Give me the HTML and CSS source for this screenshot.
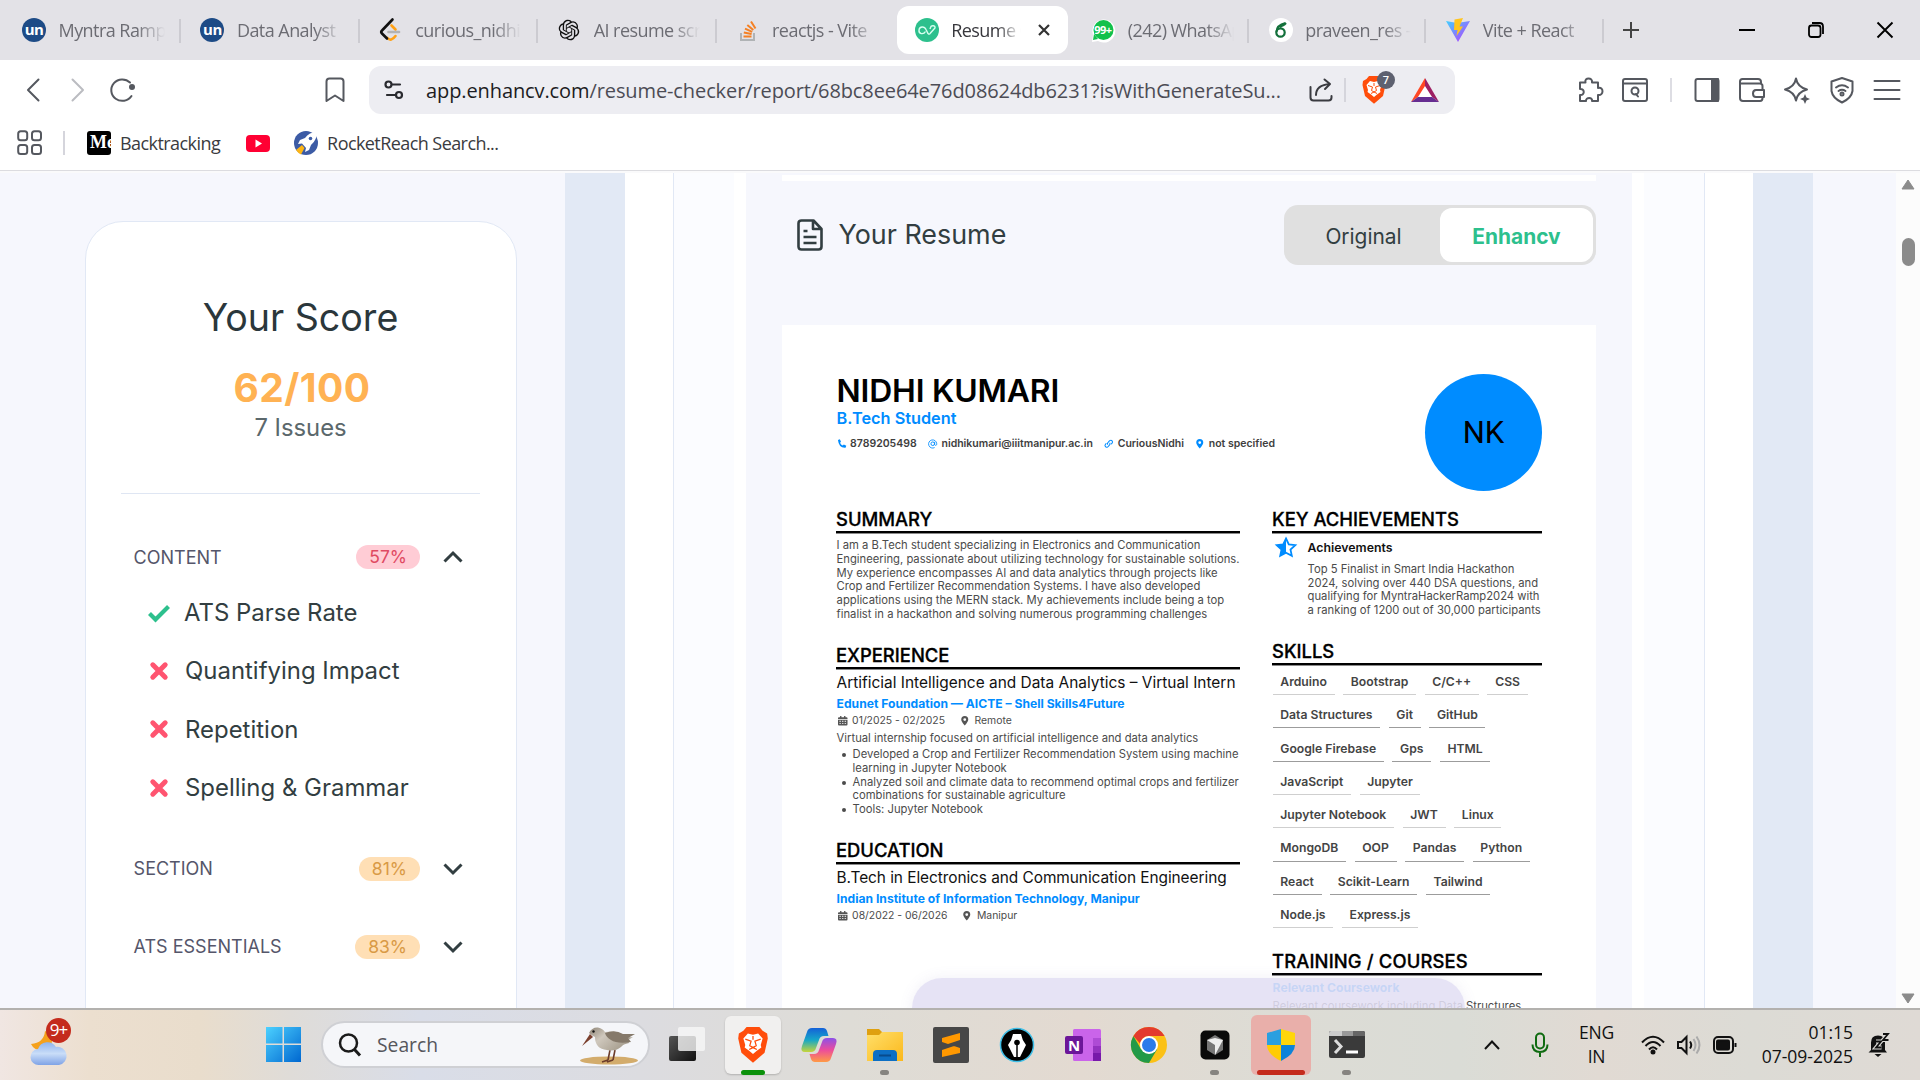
FILE: index.html
```html
<!DOCTYPE html>
<html lang="en">
<head>
<meta charset="utf-8">
<title>Resume Checker</title>
<link rel="stylesheet" href="styles.css">
</head>
<body>
<div class="tabs">
  <div class="tab"><span class="fav fav-un">un</span><span class="tab-title">Myntra Ramp</span></div>
  <div class="tab"><span class="fav fav-un">un</span><span class="tab-title">Data Analyst</span></div>
  <div class="tab"><svg class="fav" viewBox="0 0 24 24" fill="none" stroke-linecap="round" stroke-linejoin="round"><path d="M12.500 7.500L16.500 11.500M16.500 18q-4.500 6-8 2" stroke="#ffa116" stroke-width="2.600"/><path d="M13.500 1.500L3 12.500q-1.500 1.500 0 3l5 5" stroke="#111" stroke-width="2.600"/><path d="M9.500 14h10.500" stroke="#b3b3b3" stroke-width="2.600"/></svg><span class="tab-title">curious_nidhi</span></div>
  <div class="tab"><svg class="fav" viewBox="-2 -2 28 28"><path fill="#111" d="M22.282 9.821a5.985 5.985 0 0 0-.516-4.910 6.046 6.046 0 0 0-6.510-2.900A6.065 6.065 0 0 0 4.981 4.180a5.985 5.985 0 0 0-3.998 2.900 6.046 6.046 0 0 0 .743 7.097 5.980 5.980 0 0 0 .510 4.911 6.051 6.051 0 0 0 6.515 2.900A5.985 5.985 0 0 0 13.260 24a6.056 6.056 0 0 0 5.772-4.206 5.990 5.990 0 0 0 3.997-2.900 6.056 6.056 0 0 0-.747-7.073zM13.260 22.430a4.476 4.476 0 0 1-2.876-1.040l.141-.081 4.779-2.758a.795.795 0 0 0 .392-.681v-6.737l2.020 1.168a.071.071 0 0 1 .038.052v5.583a4.504 4.504 0 0 1-4.494 4.494zM3.600 18.304a4.470 4.470 0 0 1-.535-3.014l.142.085 4.783 2.759a.771.771 0 0 0 .780 0l5.843-3.369v2.332a.080.080 0 0 1-.033.062L9.740 19.950a4.500 4.500 0 0 1-6.140-1.646zM2.340 7.896a4.485 4.485 0 0 1 2.366-1.973V11.600a.766.766 0 0 0 .388.676l5.815 3.355-2.020 1.168a.076.076 0 0 1-.071 0l-4.830-2.786A4.504 4.504 0 0 1 2.340 7.872zm16.597 3.855l-5.833-3.387L15.119 7.200a.076.076 0 0 1 .071 0l4.830 2.791a4.494 4.494 0 0 1-.676 8.105v-5.678a.790.790 0 0 0-.407-.667zm2.010-3.023l-.141-.085-4.774-2.782a.776.776 0 0 0-.785 0L9.409 9.230V6.897a.066.066 0 0 1 .028-.061l4.830-2.787a4.500 4.500 0 0 1 6.680 4.660zm-12.640 4.135l-2.020-1.164a.080.080 0 0 1-.038-.057V6.075a4.500 4.500 0 0 1 7.375-3.453l-.142.080L8.704 5.460a.795.795 0 0 0-.393.681zm1.097-2.365l2.602-1.500 2.607 1.500v2.999l-2.597 1.500-2.607-1.500z"/></svg><span class="tab-title">AI resume scr</span></div>
  <div class="tab"><svg class="fav" viewBox="0 0 24 24" fill="none"><path d="M5 15v7h13v-7" stroke="#b0b3b5" stroke-width="2"/><path d="M7.500 18.500h8M7.800 14.500l7.800 1.600M9 10.600l7.200 3.300M11.300 7l6 5M15 3.500l4.500 7" stroke="#f48024" stroke-width="2"/></svg><span class="tab-title">reactjs - Vite</span></div>
  <div class="tab active"><svg class="fav" viewBox="0 0 24 24"><circle cx="12" cy="12" r="12" fill="#2dc08d"/><path d="M10.500 13.500c-2 3.500-7 2.500-6.500-1.500s5.500-4 7-.5l2 4q1.500 1.500 2.500-.5L20 10c.5-3-4-3-4.500-.5l-.5 1.500" fill="none" stroke="#d8fff0" stroke-width="1.400"/></svg><span class="tab-title">Resume C</span><svg class="tab-close" viewBox="0 0 12 12"><path d="M1 1l10 10M11 1L1 11" stroke="#333" stroke-width="2.200"/></svg></div>
  <div class="tab"><span class="fav wa"><svg viewBox="0 0 24 24"><path d="M1 24l1-7A11.500 11.500 0 1 1 7 23z" fill="#fff"/><circle cx="12.500" cy="12" r="10" fill="#11c14b"/><path d="M2 22l1-6 4 5z" fill="#11c14b"/></svg><b>99+</b></span><span class="tab-title">(242) WhatsApp</span></div>
  <div class="tab"><svg class="fav" viewBox="0 0 24 24"><circle cx="12" cy="12" r="12" fill="#fff"/><circle cx="11.500" cy="14.500" r="4.200" fill="none" stroke="#13703b" stroke-width="2.200"/><path d="M7.500 14q0-7 9-9-4 2-5.500 4.500M10 8q4 .5 7-3" fill="none" stroke="#13703b" stroke-width="2"/></svg><span class="tab-title">praveen_res -</span></div>
  <div class="tab"><svg class="fav" viewBox="0 0 24 24"><defs><linearGradient id="vt" x2="1" y2="1"><stop stop-color="#41d1ff"/><stop offset="1" stop-color="#bd34fe"/></linearGradient></defs><path d="M0 3l11 2 13-2-12 21z" fill="url(#vt)"/><path d="M17 0L8.500 1.500 8 12h3.500l-1 6L17 8.500h-3.500z" fill="#ffc51f"/></svg><span class="tab-title">Vite + React</span></div>
  <svg class="newtab" viewBox="0 0 16 16"><path d="M8 0v16M0 8h16" stroke="#444" stroke-width="2"/></svg>
  <div class="winctl">
    <svg viewBox="0 0 16 16"><path d="M0 8h16" stroke="#000" stroke-width="2"/></svg>
    <svg viewBox="0 0 16 16" fill="none" stroke="#000" stroke-width="1.800"><rect x="1" y="3.500" width="11.500" height="11.500" rx="2.500"/><path d="M4 1h7.500q3.500 0 3.500 3.500V12"/></svg>
    <svg viewBox="0 0 16 16"><path d="M.5.500l15 15M15.500.500l-15 15" stroke="#000" stroke-width="1.900"/></svg>
  </div>
</div>

<div class="toolbar">
  <div class="nav">
    <svg viewBox="0 0 14 24" width="14" height="24" class="st"><path d="M12.500 1.500L2 12l10.500 10.500"/></svg>
    <svg viewBox="0 0 14 24" width="14" height="24" class="st fwd"><path d="M1.500 1.500L12 12 1.500 22.500"/></svg>
    <svg viewBox="0 0 26 24" width="26" height="24" class="st"><path d="M21.500 18A11 10.700 0 1 1 20 4.500"/><circle cx="22" cy="9" r="3" fill="#55585f" stroke="none"/></svg>
  </div>
  <svg viewBox="0 0 20 26" width="20" height="26" class="st bm"><path d="M1.500 24V4.500q0-3 3-3h11q3 0 3 3V24L10 18.500z"/></svg>
  <div class="url">
    <svg viewBox="0 0 20 20" width="20" height="20" class="st dark"><circle cx="4.500" cy="4.500" r="3"/><path d="M8 4.500h8M3 15h8"/><circle cx="15" cy="15" r="3"/></svg>
    <span class="addr"><b>app.enhancv.com</b>/resume-checker/report/68bc8ee64e76d08624db6231?isWithGenerateSu...</span>
    <svg viewBox="0 0 24 24" width="24" height="24" class="st share"><path d="M1.500 9v10.500q0 3 3 3h15q3 0 3-3V18M7 17q0-10 14-11M15.500 1.500L21 6l-5 5"/></svg>
    <i class="bar"></i>
    <span class="brave"><svg viewBox="0 0 24 28" width="24" height="28"><use href="#lion"/></svg><em>7</em></span>
    <svg class="bat" viewBox="0 0 28 24" width="28" height="24"><path d="M14 0L0 24l14-10z" fill="#ff4724"/><path d="M14 0l14 24-14-10z" fill="#9e1f63"/><path d="M0 24h28L14 14z" fill="#662d91"/><path d="M14 8L7 19h14z" fill="#fff"/></svg>
  </div>
  <div class="tools">
    <svg viewBox="0 0 26 26" class="st"><path d="M2 8V5.500h5.500C6 0 15 0 14 5.500h6V11c6-1.500 6 8 0 7v6h-6c1-4-6.500-4-6 0H2v-6c5 .5 5-6.500 0-6z"/></svg>
    <svg viewBox="0 0 26 26" class="st"><rect x="1" y="2" width="24" height="22" rx="2"/><path d="M1 6.500h24M16 19.500l-2-2.500"/><circle cx="13" cy="14" r="3.500"/></svg>
    <i class="bar"></i>
    <svg viewBox="0 0 26 26" class="st"><rect x="1.500" y="2" width="23" height="22" rx="2"/><path d="M18 2h6v22h-6z" fill="#55585f"/></svg>
    <svg viewBox="0 0 26 26" class="st"><path d="M23.500 13V9q0-2.500-2.500-2.500H1V4.500Q1 2 3.500 2H19q3 0 3 3v1.500M1 6v15q0 3 3 3h17q2.500 0 2.500-3v-1M25 13h-8q-3 0-3 3.500t3 3.500h8z"/></svg>
    <svg viewBox="0 0 26 26" class="st"><path d="M12 1.500q1.500 8.500 11 11-9.500 2.500-11 11-1.500-8.500-11-11 9.500-2.500 11-11z"/><path d="M21 17l1.500 3.500L26 22l-3.500 1.500L21 27l-1.500-3.500L16 22l3.500-1.500z" fill="#55585f" stroke="none"/></svg>
    <svg viewBox="0 0 26 26" class="st"><path d="M13 1l10.500 3.500V14q-1 7-10.500 11.500Q3.500 21 2.500 14V4.500zM7 10.500q6-4.500 12 0M9.500 14q3.500-2.500 7 0"/><circle cx="13" cy="17" r="1.500"/></svg>
    <svg viewBox="0 0 26 26" class="st"><path d="M.5 4h25M.5 13h25M.5 22h25"/></svg>
  </div>
</div>

<div class="bookmarks">
  <svg viewBox="0 0 26 26" width="26" height="26" class="st"><rect x="1.200" y="1.200" width="9" height="9" rx="2.500"/><rect x="15" y="1.200" width="9" height="9" rx="2.500"/><rect x="1.200" y="15" width="9" height="9" rx="2.500"/><rect x="15" y="15" width="9" height="9" rx="2.500"/></svg>
  <i class="bar"></i>
  <span class="medium">Me</span><span class="bk">Backtracking</span>
  <svg class="yt" viewBox="0 0 24 17" width="24" height="17"><rect width="24" height="17" rx="4" fill="#ff0033"/><path d="M9.500 4.500l6.500 4-6.500 4z" fill="#fff"/></svg>
  <svg class="rr" viewBox="0 0 24 24" width="24" height="24"><circle cx="12" cy="12" r="12" fill="#3c5ba5"/><path d="M23 1q-8 0-12 6l-5 2-2 4 4-.5L12 17l-1 4 4-2 2-5q6-5 6-13z" fill="#fff"/><path d="M8 14l-6 5q2 3 5 4.500L10.500 17z" fill="#fdb515"/><circle cx="16.500" cy="7.500" r="1.800" fill="#3c5ba5"/></svg><span class="bk">RocketReach Search...</span>
</div>

<div class="page">
  <div class="left">
    <div class="score">
      <h1>Your Score</h1>
      <div class="num">62/100</div>
      <div class="issues">7 Issues</div>
      <hr>
      <div class="cat"><span>CONTENT</span><em class="pill red">57%</em><svg viewBox="0 0 20 12" width="20" height="12"><path d="M1.500 10.500L10 2l8.500 8.500"/></svg></div>
      <ul class="checks">
        <li><svg viewBox="0 0 24 18" width="24" height="18"><path d="M2.500 9.500l6 6L21.500 2.500" stroke="#2dc08d" stroke-width="4.200" fill="none"/></svg>ATS Parse Rate</li>
        <li><svg class="x" viewBox="0 0 18 18"><path d="M2.800 2.800l12.400 12.400M15.200 2.800L2.800 15.200"/></svg>Quantifying Impact</li>
        <li><svg class="x" viewBox="0 0 18 18"><path d="M2.800 2.800l12.400 12.400M15.200 2.800L2.800 15.200"/></svg>Repetition</li>
        <li><svg class="x" viewBox="0 0 18 18"><path d="M2.800 2.800l12.400 12.400M15.200 2.800L2.800 15.200"/></svg>Spelling &amp; Grammar</li>
      </ul>
      <div class="cat"><span>SECTION</span><em class="pill">81%</em><svg viewBox="0 0 20 12" width="20" height="12"><path d="M1.500 1.500L10 10l8.500-8.500"/></svg></div>
      <div class="cat last"><span>ATS ESSENTIALS</span><em class="pill">83%</em><svg viewBox="0 0 20 12" width="20" height="12"><path d="M1.500 1.500L10 10l8.500-8.500"/></svg></div>
    </div>
  </div>
  <div class="band"></div>
  <div class="frame">
    <div class="pane">
      <div class="strip"></div>
      <div class="head">
        <svg viewBox="0 0 26 32" width="26" height="32"><path d="M4.500 1.500h12L24.500 10v17.500q0 3-3 3h-17q-3 0-3-3v-23q0-3 3-3zM16 2v8h8M6.500 12h4M6.500 18h13M6.500 24h13" fill="none" stroke="#323e41" stroke-width="2.600" stroke-linejoin="round"/></svg>
        <h2>Your Resume</h2>
        <div class="toggle"><span>Original</span><b>Enhancv</b></div>
      </div>
      <div class="paper">
        <div class="top">
          <div>
            <div class="name">NIDHI KUMARI</div>
            <div class="role">B.Tech Student</div>
            <div class="contacts">
              <span><svg viewBox="0 0 10 10"><path d="M1 1l2-.8 1.200 2.600L3.200 4q.8 2 2.800 2.900l1.200-1.100L9.800 7 9 9.200Q2 9.800 1 1z" fill="#008cff"/></svg>8789205498</span>
              <span><svg viewBox="0 0 10 10" fill="none" stroke="#008cff"><circle cx="5" cy="5" r="1.900"/><path d="M7 3v3q1 1.500 2.200 0V5A4.300 4.300 0 1 0 7 9" stroke-width=".9"/></svg>nidhikumari@iiitmanipur.ac.in</span>
              <span><svg viewBox="0 0 10 10" fill="none" stroke="#008cff" stroke-width="1.100"><path d="M4 6Q3 4.500 4.500 3.200l1.500-1.500q1.500-1 2.500.2t0 2.400L7.500 5.500M6 4q1 1.500-.5 2.800L4 8.300q-1.500 1-2.500-.2t0-2.400L2.500 4.500"/></svg>CuriousNidhi</span>
              <span class="np"><svg viewBox="0 0 10 10"><use href="#pin" fill="#008cff"/></svg>not specified</span>
            </div>
          </div>
          <div class="avatar">NK</div>
        </div>
        <div class="cols">
          <div class="main">
            <h3>SUMMARY</h3>
            <p>I am a B.Tech student specializing in Electronics and Communication<br>Engineering, passionate about utilizing technology for sustainable solutions.<br>My experience encompasses AI and data analytics through projects like<br>Crop and Fertilizer Recommendation Systems. I have also developed<br>applications using the MERN stack. My achievements include being a top<br>finalist in a hackathon and solving numerous programming challenges</p>
            <h3>EXPERIENCE</h3>
            <div class="job">Artificial Intelligence and Data Analytics – Virtual Intern</div>
            <div class="org">Edunet Foundation — AICTE – Shell Skills4Future</div>
            <div class="when"><svg viewBox="0 0 10 10"><use href="#cal"/></svg><span>01/2025 - 02/2025</span><svg viewBox="0 0 10 10"><use href="#pin" fill="#555"/></svg>Remote</div>
            <p class="desc">Virtual internship focused on artificial intelligence and data analytics</p>
            <ul class="bul"><li>Developed a Crop and Fertilizer Recommendation System using machine<br>learning in Jupyter Notebook</li><li>Analyzed soil and climate data to recommend optimal crops and fertilizer<br>combinations for sustainable agriculture</li><li>Tools: Jupyter Notebook</li></ul>
            <h3>EDUCATION</h3>
            <div class="job degree">B.Tech in Electronics and Communication Engineering</div>
            <div class="org school">Indian Institute of Information Technology, Manipur</div>
            <div class="when"><svg viewBox="0 0 10 10"><use href="#cal"/></svg><span>08/2022 - 06/2026</span><svg viewBox="0 0 10 10"><use href="#pin" fill="#555"/></svg>Manipur</div>
          </div>
          <div class="side">
            <h3>KEY ACHIEVEMENTS</h3>
            <div class="ach">
              <svg viewBox="0 0 22 20" width="22" height="20"><path d="M11 1.500l2.800 5.900 6.500.8-4.800 4.400 1.300 6.300L11 15.800l-5.800 3.100 1.300-6.300L1.700 8.200l6.500-.8z" fill="none" stroke="#008cff" stroke-width="1.800"/><path d="M11 1.500v14.300l-5.800 3.100 1.300-6.300L1.700 8.200l6.500-.8z" fill="#008cff"/></svg>
              <div><b>Achievements</b><p>Top 5 Finalist in Smart India Hackathon<br>2024, solving over 440 DSA questions, and<br>qualifying for MyntraHackerRamp2024 with<br>a ranking of 1200 out of 30,000 participants</p></div>
            </div>
            <h3 class="sk">SKILLS</h3>
            <div class="skills">
              <div><span>Arduino</span><span>Bootstrap</span><span>C/C++</span><span>CSS</span></div>
              <div class="d"><span>Data Structures</span><span>Git</span><span>GitHub</span></div>
              <div class="d"><span>Google Firebase</span><span>Gps</span><span>HTML</span></div>
              <div><span>JavaScript</span><span>Jupyter</span></div>
              <div><span>Jupyter Notebook</span><span>JWT</span><span>Linux</span></div>
              <div class="d"><span>MongoDB</span><span>OOP</span><span>Pandas</span><span>Python</span></div>
              <div class="d"><span>React</span><span>Scikit-Learn</span><span>Tailwind</span></div>
              <div><span>Node.js</span><span>Express.js</span></div>
            </div>
            <h3 class="train">TRAINING / COURSES</h3>
            <div class="org rel">Relevant Coursework</div>
            <p class="relp">Relevant coursework including Data Structures,</p>
          </div>
        </div>
      </div>
    </div>
  </div>
  <div class="band"></div>
  <div class="edge"></div>
  <div class="scroll"><svg viewBox="0 0 14 11" width="14" height="11"><path d="M7 1l6 9H1z" stroke="#8b8b8b" stroke-linejoin="round"/></svg><i></i><svg class="dn" viewBox="0 0 14 11" width="14" height="11"><path d="M7 10L1 1h12z" stroke="#8b8b8b" stroke-linejoin="round"/></svg></div>
  <div class="purple"></div>
</div>

<div class="taskbar">
  <div class="weather"><svg viewBox="0 0 38 46" width="38" height="46"><path d="M15 9q-1 12-14 13 4 8 14 6 10-5 6-16z" fill="#f5a11c"/><defs><linearGradient id="cl" x2="0" y2="1"><stop stop-color="#8fb4ee"/><stop offset=".5" stop-color="#c9ddf8"/><stop offset="1" stop-color="#7fa3e6"/></linearGradient></defs><path d="M9 43a8 8 0 0 1-1-16 10 10 0 0 1 18-2 9 9 0 0 1 3 18z" fill="url(#cl)"/></svg><em>9+</em></div>
  <svg class="win" viewBox="0 0 35 35" width="35" height="35"><defs><linearGradient id="wn" gradientUnits="userSpaceOnUse" x2="35" y2="35"><stop stop-color="#4cd1ff"/><stop offset="1" stop-color="#0067d0"/></linearGradient></defs><path d="M0 0h16.500v16.500H0zM18 0h17v16.500H18zM0 18h16.500v17H0zM18 18h17v17H18z" fill="url(#wn)"/></svg>
  <div class="search"><svg viewBox="0 0 24 24" width="24" height="24"><circle cx="10.500" cy="10" r="8.500" fill="none" stroke="#1a1a1a" stroke-width="2.500"/><path d="M16.500 16.500l5.500 6" stroke="#1a1a1a" stroke-width="3"/></svg><span>Search</span>
    <svg class="bird" viewBox="0 0 60 38" width="60" height="38"><defs><linearGradient id="bd" x2="1" y2=".6"><stop stop-color="#8d8374"/><stop offset=".4" stop-color="#cfc8bd"/><stop offset="1" stop-color="#a39a8a"/></linearGradient></defs><ellipse cx="30" cy="34.500" rx="29" ry="4" fill="#d3ac6c"/><path d="M31 24l-2 10M36 24l-2 10M29 34l-6 2M34 34l-6 2" stroke="#6b3b2a" stroke-width="1.600" fill="none"/><path d="M11 8L3 20 14 11z" fill="#7a3f2d"/><path d="M10 7q3-6 9-5.500 5 1 7 4.500 12-2 18 3 5 3 10 2l-5 3 1 3q-6 1-8 4-6 5-14 3-12-1-12-13l-2-1z" fill="url(#bd)"/><path d="M26 7q10-4 18 1l12 0-7 4 3 4q-14 2-20-2-5-3-6-7z" fill="#85796a"/><circle cx="14.500" cy="5.500" r="1.200" fill="#111"/></svg></div>
  <div class="apps">
    <div class="app"><svg viewBox="0 0 36 36"><defs><linearGradient id="tv" x2="1" y2="1"><stop stop-color="#555"/><stop offset="1" stop-color="#111"/></linearGradient></defs><rect y="9" width="27" height="25" rx="2" fill="url(#tv)"/><rect x="9" width="27" height="24" rx="2" fill="#f8f8f8" fill-opacity=".8"/></svg></div>
    <div class="app on"><svg viewBox="0 0 24 28"><defs><g id="lion"><path d="M7 0h10l2.500 3L23 5l.5 4L21 20l-9 7.800L3 20 .5 9 1 5l3.500-2z" fill="#ff4d0b"/><path d="M8 5l4 1 4-1 3.500 4-1.500 5 .5 2-3.500 2.500L12 21l-3-2.500L5.500 16l.5-2L4.500 9z" fill="#fff"/><path d="M6 9.500l4.500 1.500-1 3.500 2.500 1.500 2.500-1.500-1-3.500L18 9.500M12 7v3M9 17.500l3-1.500 3 1.500" stroke="#ff4d0b" stroke-width="1" fill="none"/></g></defs><use href="#lion"/></svg><i></i></div>
    <div class="app"><svg viewBox="0 0 36 36" fill="none"><defs><linearGradient id="c1" x2="0" y2="1"><stop stop-color="#1461d8"/><stop offset=".5" stop-color="#16a7c8"/><stop offset="1" stop-color="#c6d53a"/></linearGradient><linearGradient id="c2" x2="0" y2="1"><stop stop-color="#8c50e8"/><stop offset=".5" stop-color="#ec4c9c"/><stop offset="1" stop-color="#ff9a45"/></linearGradient></defs><path d="M11 1h11q3 0 4 3l1.500 5H23q-4 0-5 4l-3 8q-1 4-5 4H4q-5 0-3-6L6 5q1-4 5-4z" fill="url(#c1)"/><path d="M25 35H14q-3 0-4-3l-1.500-5H13q4 0 5-4l3-8q1-4 5-4h6q5 0 3 6l-5 14q-1 4-5 4z" fill="url(#c2)"/></svg></div>
    <div class="app"><svg viewBox="0 0 36 36"><defs><linearGradient id="fd" x2="1" y2="1"><stop stop-color="#ffdf6a"/><stop offset="1" stop-color="#fbb81b"/></linearGradient></defs><path d="M0 2h12l4 4v6H0z" fill="#dfa010"/><path d="M0 8h12l3-3h21v29H0z" fill="url(#fd)"/><path d="M6 34V27q0-4 4-4h16q4 0 4 4v7z" fill="#0d6fc4"/><path d="M12 28.500h12" stroke="#084b8c" stroke-width="2"/></svg><i class="dot"></i></div>
    <div class="app"><svg viewBox="0 0 36 36"><rect width="36" height="36" rx="2" fill="#474747"/><path d="M27 6v7l-12 4 12 4v5L9 30v-7l12-4-12-4v-4z" fill="#ff9800"/></svg></div>
    <div class="app"><svg viewBox="0 0 36 36"><circle cx="18" cy="18" r="16.500" fill="#000" stroke="#3fbfe8" stroke-width="1.500"/><path d="M14 7h8q1 6 5 11l-6 12h-6L9 18q4-5 5-11z" fill="#fff"/><path d="M18 16v14" stroke="#000" stroke-width="1.500"/><circle cx="18" cy="15.500" r="2.800" fill="#000"/></svg></div>
    <div class="app note"><svg viewBox="0 0 36 36"><rect x="8" y="2" width="28" height="32" rx="1.500" fill="#ca64ea"/><path d="M28 11h8v8h-8z" fill="#ae4bd5"/><path d="M28 19h8v7h-8z" fill="#9332bf"/><path d="M28 26h8v8h-8z" fill="#7719aa"/><rect y="9" width="18" height="18" rx="2" fill="#6c1699"/></svg><b>N</b></div>
    <div class="app"><svg viewBox="0 0 36 36"><circle cx="18" cy="18" r="18" fill="#fbc116"/><path d="M2.400 9l7.800 13.500L18 18l8 4.500L18 36A18 18 0 0 1 2.400 9z" fill="#229a48"/><path d="M2.400 9A18 18 0 0 1 33.600 9H18q-7 0-9 7.500z" fill="#e33b2e"/><circle cx="18" cy="18" r="9" fill="#fff"/><circle cx="18" cy="18" r="7" fill="#2b7bea"/></svg></div>
    <div class="app"><svg viewBox="0 0 36 36"><rect x="3.500" y="3.500" width="29" height="29" rx="5" fill="#0a0a0a"/><path d="M18 8l8 5v10l-8 5-8-5V13z" fill="#777"/><path d="M10 13l8-2 8 2-8 15v-10z" fill="#eee"/></svg><i class="dot"></i></div>
    <div class="app alert"><svg viewBox="0 0 32 36"><defs><clipPath id="sh"><path d="M16 2l14 4v12q0 9-14 16Q2 27 2 18V6z"/></clipPath></defs><g clip-path="url(#sh)"><path d="M0 0h16v18H0z" fill="#2a9fe0"/><path d="M16 0h16v18H16z" fill="#ffd60a"/><path d="M0 18h16v18H0z" fill="#ffcb05"/><path d="M16 18h16v18H16z" fill="#0d83d8"/></g></svg><i></i></div>
    <div class="app"><svg viewBox="0 0 36 36"><rect y="4" width="36" height="27" rx="2" fill="#3a3a3a"/><path d="M0 9V6q0-2 2-2h11v5z" fill="#ccc"/><path d="M13 4h11v5H13z" fill="#999"/><path d="M24 4h10q2 0 2 2v3H24z" fill="#666"/><path d="M6 13l6 6.500L6 26" fill="none" stroke="#ddd" stroke-width="3"/><path d="M17 25h12" stroke="#fff" stroke-width="3"/></svg><i class="dot"></i></div>
  </div>
  <div class="tray">
    <svg viewBox="0 0 16 10" width="16" height="10" class="tk up"><path d="M1 9l7-7.500L15 9"/></svg>
    <svg viewBox="0 0 18 26" width="18" height="26" class="tk mic"><rect x="5" y="1.500" width="8" height="15" rx="4"/><path d="M1.500 12.500q0 7.500 7.500 7.500t7.500-7.500M9 20v5"/></svg>
    <div class="lang">ENG<br>IN</div>
    <svg viewBox="0 0 24 20" width="24" height="20" class="tk wifi"><path d="M1 7.500q11-11.500 22 0M4.500 11q7.500-8 15 0M8 14.500q4-4.500 8 0"/><circle cx="12" cy="17" r="1.500" fill="#111"/></svg>
    <svg viewBox="0 0 24 20" width="24" height="20" class="tk vol"><path d="M1 7v6h3.500l5 5V2l-5 5zM13 6.500q2.500 3.500 0 7"/><path d="M16.500 4q4 6 0 12M19.500 1.500q6 8.500 0 17" stroke="#aaa"/></svg>
    <svg viewBox="0 0 24 20" width="24" height="20" class="tk batt"><rect x="1" y="2" width="19" height="16" rx="4"/><rect x="4" y="5.500" width="12" height="9" rx="1" fill="#111"/><path d="M22.500 8v4"/></svg>
    <div class="clock">01:15<br>07-09-2025</div>
    <svg viewBox="0 0 22 24" width="22" height="24" class="bell"><path d="M3 17V9.500Q3 2.500 10 2.500t7 7V17l2 2.500H.5z" fill="#111"/><path d="M6.500 21h7L10 24z" fill="#111"/><path d="M15 1h5l-5 6h5.500M8 8.500h5L8 14.500h5.500" fill="none" stroke="#dddcd8" stroke-width="4"/><path d="M15 1h5l-5 6h5.500M8 8.500h5L8 14.500h5.500" fill="none" stroke="#111" stroke-width="1.800"/></svg>
  </div>
</div>

<svg width="0" height="0" class="defs"><defs>
  <path id="pin" d="M5 10Q1.300 6 1.300 3.700a3.700 3.700 0 0 1 7.400 0Q8.700 6 5 10zM5 2.300a1.500 1.500 0 1 0 0 3 1.500 1.500 0 0 0 0-3z" fill-rule="evenodd"/>
  <g id="cal" fill="#555"><path d="M1 1.300h8q1 0 1 1V3.200H0V2.300q0-1 1-1zM2.200 0h1.400v2H2.200zM6.400 0h1.400v2H6.400z"/><path d="M0 3.900h10V9q0 1-1 1H1Q0 10 0 9zM1.500 5v1h1.500V5zm2.700 0v1h1.500V5zM7 5v1h1.500V5zM1.500 7.500v1h1.500v-1zm2.700 0v1h1.500v-1zm2.800 0v1h1.500v-1z" fill-rule="evenodd"/></g>
</defs></svg>
</body>
</html>
```
FILE: styles.css
```css
* { box-sizing: border-box; }
body { margin: 0; width: 1920px; height: 1080px; overflow: hidden; background: #fff; font-family: Inter, "Liberation Sans", sans-serif; color: #323e41; }
svg { display: block; flex: none; overflow: visible; }
h1, h2, h3, p, ul { margin: 0; padding: 0; font-weight: 400; list-style: none; }
em, i { font-style: normal; }
.defs { height: 0; }
.st { fill: none; stroke: #55585f; stroke-width: 2; stroke-linejoin: round; stroke-linecap: round; }
.dark { stroke: #2a2b30; stroke-width: 2.2; }
.tabs, .toolbar, .bookmarks, .taskbar { font-family: "Open Sans", "Noto Sans", sans-serif; }

/* tab strip */
.tabs { display: flex; height: 60px; padding-left: 3px; background: #e3e2e7; align-items: center; }
.tab { position: relative; display: flex; flex: none; width: 178.4px; height: 48px; padding-left: 19px; align-items: center; gap: 12.500px; }
.tab::after { content: ""; position: absolute; right: 0; top: 13px; width: 2px; height: 24px; background: #cccbd1; }
.tab:nth-child(5)::after, .tab.active::after { display: none; }
.tab:nth-child(n+7) { width: 177.600px; padding-left: 20px; gap: 12.500px; }
.fav { flex: none; width: 24px; height: 24px; }
.fav-un { border-radius: 50%; background: #1d4b86; color: #fff; font: 700 15px/22px "Open Sans", sans-serif; text-align: center; letter-spacing: -.5px; }
.tab-title { width: 106px; overflow: hidden; white-space: nowrap; font-size: 18px; letter-spacing: -.55px; line-height: 26px; color: #6c6c73; -webkit-mask-image: linear-gradient(90deg, #000 78px, transparent 106px); mask-image: linear-gradient(90deg, #000 78px, transparent 106px); }
.tab.active { width: 170.500px; margin: 0 3.500px 0 2.200px; padding-left: 18px; background: #fff; border-radius: 12px; gap: 12px; }
.active .tab-title { width: 70px; color: #37373c; -webkit-mask-image: linear-gradient(90deg, #000 46px, transparent 70px); mask-image: linear-gradient(90deg, #000 46px, transparent 70px); }
.tab-close { width: 12px; height: 12px; margin-left: 5px; }
.wa { position: relative; }
.wa b { position: absolute; left: 3px; top: 4px; color: #fff; font-size: 11px; line-height: 16px; letter-spacing: -.5px; }
.newtab { width: 16px; height: 16px; margin-left: 19.500px; }
.winctl { display: flex; gap: 53px; margin-left: auto; padding-right: 27px; }
.winctl svg { width: 16px; height: 16px; }

/* toolbar */
.toolbar { display: flex; height: 60px; padding-left: 26px; align-items: center; background: #fff; }
.nav { display: flex; gap: 24px; width: 299px; align-items: center; }
.nav svg:nth-child(2) { margin: 0 1px 0 7px; }
.nav .fwd { stroke: #bbbcc1; }
.bm { margin-right: 24px; }
.url { display: flex; flex: none; width: 1086px; height: 48px; border-radius: 12px; background: #ededf2; align-items: center; padding-left: 15px; }
.addr { width: 858px; margin: 2px 0 0 22px; white-space: nowrap; font-size: 20px; letter-spacing: -.1px; line-height: 30px; color: #4c4c55; }
.addr b { font-weight: 400; color: #1c1c22; }
.share { margin-left: 25px; stroke: #3a3b40; }
.bar { width: 2px; height: 24px; background: #d5d5dc; }
.url .bar { margin: 0 16px 0 11px; }
.brave { position: relative; }
.brave em { position: absolute; left: 15px; top: -5px; width: 18px; height: 18px; border-radius: 9px; background: #5e6170; color: #fff; font-size: 11px; font-weight: 600; line-height: 18px; text-align: center; }
.bat { margin-left: 25px; }
.tools { display: flex; margin-left: auto; padding-right: 20px; align-items: center; gap: 19px; }
.tools svg { width: 26px; height: 26px; }
.tools svg:nth-child(2) { margin-left: -1px; }
.tools .bar { margin: 0 3px 0 3px; background: #dddde3; }

/* bookmarks */
.bookmarks { display: flex; height: 53px; padding: 0 0 5px 17px; align-items: center; border-bottom: 2px solid #fafafb; box-shadow: inset 0 -1px 0 #dcdce0; background: #fff; }
.bookmarks .bar { margin: 0 22px 0 20px; }
.medium { width: 24px; height: 24px; overflow: hidden; border-radius: 3px; background: #000; color: #fff; font: 700 18px/23px "Liberation Serif", serif; padding-left: 3px; }
.bk { margin-left: 9px; font-size: 18px; letter-spacing: -.57px; line-height: 26px; color: #3a3b40; white-space: nowrap; }
.yt { margin-left: 26px; }
.rr { margin-left: 24px; }

/* page */
.page { position: relative; display: flex; height: 835px; overflow: hidden; background: #fff; }
.left { width: 565px; background: #f6f7fd; padding: 48px 0 0 85px; }
.band { width: 60px; background: #e2e9f5; flex: none; }
.frame { flex: none; width: 1128px; padding: 0 48px; }
.pane { width: 1032px; height: 835px; padding: 0 108px; border: 0 solid #e1e8f5; border-width: 0 1px; background: linear-gradient(90deg, #fbfcff 60px, #fff 60px 72px, #f6f7fd 72px 958px, #fff 958px 970px, #fbfcff 970px); }
.edge { width: 83px; background: #f6f7fd; flex: none; }
.scroll { width: 24px; background: #fcfcfc; display: flex; flex-direction: column; align-items: center; padding: 6px 0 4px; fill: #8b8b8b; }
.scroll i { width: 13px; height: 28px; margin-top: 48px; border-radius: 7px; background: #8b8b8b; }
.scroll .dn { margin-top: auto; }
.purple { position: absolute; left: 912px; top: 805px; width: 553px; height: 60px; border-radius: 30px 30px 0 0; background: rgba(227, 223, 244, .88); box-shadow: 0 0 14px rgba(120, 110, 180, .1); }

.score { width: 432px; height: 900px; border: 1px solid #e1e8f5; border-radius: 38px; background: #fff; padding: 73px 36px 0 35px; text-align: center; }
.score h1 { font-size: 37.600px; line-height: 45px; color: #2b373b; }
.num { margin-top: 25px; font-size: 39px; font-weight: 700; letter-spacing: .4px; line-height: 46px; color: #ffb253; padding-left: 3px; }
.issues { font-size: 23.800px; line-height: 34px; color: #5b686c; }
hr { height: 1px; margin: 48px 0 0; border: 0; background: #dfe6f3; }
.cat { display: flex; height: 30px; align-items: center; margin: 48px 17px 0 12.600px; font-size: 18px; color: #55566a; }
.pill { height: 24px; margin-left: auto; padding: 0 13px; border-radius: 12px; background: #ffdfb5; color: #d99a45; font-size: 17.500px; line-height: 24px; }
.red { background: #ffccd5; color: #df4a62; }
.cat svg { margin-left: 23px; fill: none; stroke: #323e41; stroke-width: 3; }
.checks { margin: 11.500px 0 0 26px; text-align: left; }
.checks li { display: flex; height: 58.300px; align-items: center; font-size: 23.950px; }
.checks svg { margin-right: 13px; }
.checks .x { width: 18px; height: 18px; margin: 0 17px 0 3px; stroke: #ff5470; stroke-width: 5; stroke-linecap: round; }
.checks + .cat { margin-top: 37px; }

.strip { height: 8px; border-top: 2px solid #f6f7fd; background: #fff; }
.head { display: flex; height: 144px; padding: 24px 0 0 15px; }
.head > svg { margin-top: 14px; }
.head h2 { margin: 11px 0 0 15.500px; font-size: 26.900px; line-height: 36px; }
.toggle { display: flex; width: 312px; height: 60px; margin-left: auto; padding: 3px; border-radius: 14px; background: #e0e0e0; text-align: center; font-size: 20.900px; line-height: 57px; }
.toggle span { width: 153px; }
.toggle b { width: 153px; height: 54px; border-radius: 12px; background: #fff; color: #2dc08d; line-height: 57px; }

.paper { width: 814px; height: 700px; background: #fff; padding: 48px 54px 0; color: #4b4b4b; white-space: nowrap; }
.top { display: flex; justify-content: space-between; height: 135.500px; }
.top > div:first-child, .main > :not(h3), .side > :not(h3) { position: relative; left: .6px; }
.name { font-size: 31.900px; font-weight: 600; letter-spacing: -.2px; line-height: 35px; color: #000; }
.role { font-size: 16.300px; font-weight: 600; line-height: 21px; color: #008cff; }
.contacts { display: flex; gap: 11.300px; margin-top: 7.500px; font-size: 10.500px; font-weight: 600; line-height: 14px; color: #3e3e3e; }
.contacts span { display: flex; align-items: center; gap: 4px; }
.contacts svg { width: 9.500px; height: 9.500px; }
.avatar { width: 117px; height: 117px; margin-top: 1px; border-radius: 50%; background: #008cff; color: #000; font: 400 31px/117px Roboto, sans-serif; text-align: center; }
.cols { display: grid; grid-template-columns: 404px 270px; column-gap: 32px; }
h3 { height: 24.500px; border-bottom: 2px solid #000; box-shadow: 0 1px 0 #8a8a8a; font-size: 18.400px; font-weight: 500; line-height: 21px; color: #000; -webkit-text-stroke: .3px #000; }
.cols p, .bul { margin-top: 6px; font-size: 11.240px; line-height: 13.800px; }
p + h3, .bul + h3 { margin-top: 22.800px; }
.job { margin-top: 4px; font-size: 15.450px; line-height: 20px; color: #111; }
.degree { letter-spacing: -.07px; }
.org { margin-top: 3.400px; font-size: 12.130px; font-weight: 700; line-height: 16px; color: #008cff; }
.school { margin-top: 2.600px; }
.when { display: flex; align-items: center; margin-top: 1.400px; font-size: 10.400px; line-height: 14px; padding-left: 1px; }
.school + .when { margin-top: 2.200px; }
.when svg { width: 9.500px; height: 9.500px; margin-right: 5px; }
.when span { margin-right: 15px; }
.cols .desc { margin-top: 4px; }
.cols .bul { margin-top: 2.300px; }
.bul li { position: relative; padding-left: 16px; }
.bul li::before { content: ""; position: absolute; left: 5px; top: 5px; width: 4px; height: 4px; border-radius: 2px; background: #4b4b4b; }
.ach { display: flex; margin-top: 6.700px; gap: 11px; padding-left: 2px; }
.ach svg { margin-top: -3px; }
.ach b { display: block; font-size: 12.300px; font-weight: 600; line-height: 16px; color: #111; }
.cols .ach p { margin-top: 7.200px; }
.sk { margin-top: 22.600px; }
.skills { display: flex; flex-direction: column; gap: 7.200px; margin: 3.900px 0 22.800px; font-size: 12.200px; font-weight: 600; line-height: 25.100px; color: #444; }
.skills div { display: flex; gap: 8.600px; }
.skills span { padding: 0 7.700px; border-bottom: 1px solid #cfcfcf; }
.skills .d span { border-color: #9c9c9c; }
.train { letter-spacing: .15px; }
.rel { margin-top: 4.600px; }
.cols .relp { margin-top: 3.500px; }

/* taskbar */
.taskbar { display: flex; height: 72px; border-top: 2px solid #b3b1ae; padding-bottom: 1px; align-items: center; background: linear-gradient(90deg, #f0e6e2 0, #ecdfcf 90px, #e9ddcc 200px, #dfdcd8 290px, #d9dde8 420px, #dcdce0 640px, #dedcd6 850px, #e3dad1 1080px, #dddcd5 1270px, #dadcd6 1460px, #e1dad3 1600px, #dcdbd5 1750px, #dfdad5 100%); }
.weather { position: relative; width: 236px; padding-left: 30px; }
.weather em { position: absolute; left: 46px; top: -4px; width: 25px; height: 25px; border-radius: 50%; background: #c42b1c; color: #fff; font-size: 17px; line-height: 24px; text-align: center; letter-spacing: -1px; }
.win { margin: 0 20px 0 30px; }
.search { display: flex; width: 329px; height: 47px; border: 2px solid #cfd0d4; border-radius: 24px; background: #f5f6f9; align-items: center; padding: 0 9px 0 15px; }
.search span { margin-left: 15px; font-size: 19.300px; color: #56575c; }
.bird { margin-left: auto; }
.apps { display: flex; margin-left: 9px; gap: 10px; height: 58px; }
.app { position: relative; display: flex; flex: none; width: 56px; height: 58px; align-items: center; justify-content: center; border-radius: 6px; }
.app svg { width: 36px; height: 36px; }
.app i { position: absolute; left: 16px; bottom: -1px; width: 24px; height: 5px; border-radius: 3px; background: #0b910b; }
.app .dot { left: 23px; width: 9px; background: #868480; }
.on { background: #f1f0ef; box-shadow: 0 1px 2px rgba(0, 0, 0, .2); }
.alert { width: 60px; height: 60px; margin: -1px -2px; background: #e9afaa; }
.app.alert i { left: 6px; bottom: 0; width: 48px; background: #c42b1c; }
.note b { position: absolute; left: 13px; top: 20px; color: #fff; font-size: 15px; line-height: 18px; }
.tray { display: flex; margin-left: auto; align-items: center; padding-right: 30px; }
.tk { fill: none; stroke: #111; stroke-width: 2; }
.mic { stroke: #0f6b10; margin: 0 30px 0 31px; }
.lang, .clock { font-size: 17.500px; line-height: 23.500px; color: #111; text-align: center; letter-spacing: -.2px; }
.wifi { margin-left: 27px; }
.vol { margin-left: 12px; }
.batt { margin-left: 12px; }
.clock { width: 100px; margin: 0 15px 0 16px; text-align: right; letter-spacing: 0; }
```
